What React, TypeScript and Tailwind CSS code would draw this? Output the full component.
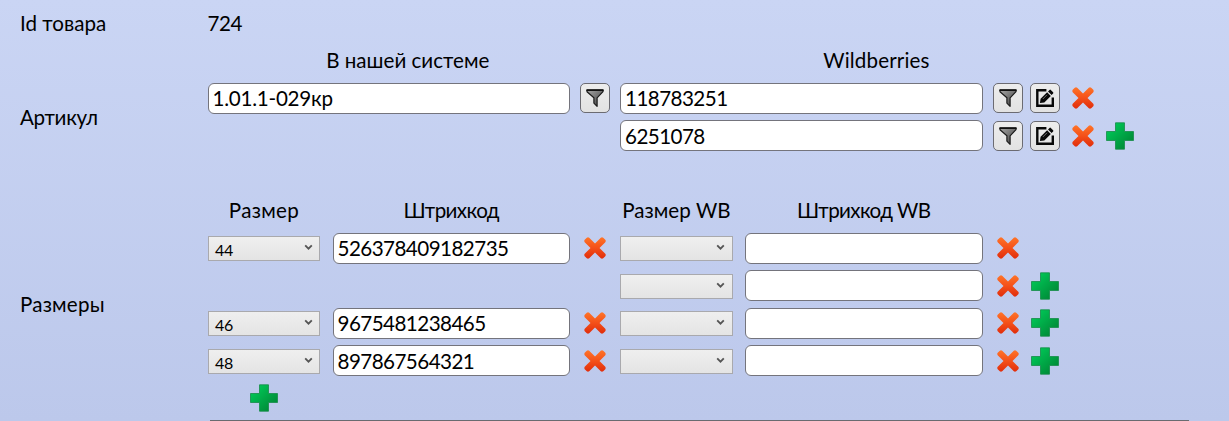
import { ReactNode } from "react";

function Filter() {
  return (
    <button className="flex h-[30px] w-[30px] items-center justify-center rounded-[5px] border border-[#6b6b72] bg-linear-to-b from-[#ededed] to-[#e2e2e2]">
      <svg width="20" height="20" viewBox="0 0 20 20">
        <defs>
          <linearGradient id="funnel" x1="0" y1="0" x2="1" y2="1">
            <stop offset="0" stopColor="#a8a8a8" />
            <stop offset="1" stopColor="#3c3c3c" />
          </linearGradient>
        </defs>
        <path d="M2 1.9h16v1.8l-5.9 6.1v8.5l-3.2-3.2V9.8L2 3.7z" fill="url(#funnel)" stroke="#1a1a1a" strokeWidth="1.2" strokeLinejoin="round" />
        <path d="M2 2.2h16" stroke="#111" strokeWidth="1.6" strokeLinecap="round" />
      </svg>
    </button>
  );
}

function Edit() {
  return (
    <button className="flex h-[30px] w-[30px] items-center justify-center rounded-[5px] border border-[#6b6b72] bg-linear-to-b from-[#ededed] to-[#e2e2e2]">
      <svg width="20" height="20" viewBox="0 0 20 20">
        <path d="M11.4 2.2H2.3v15.5h15.5V9.4" fill="none" stroke="#080808" strokeWidth="2.4" />
        <path d="M4.9 15.1l.7-4.3 6.5-6.5 3.7 3.7-6.5 6.5z" fill="#080808" />
        <path d="M13 3.4l1.5-1.5q.7-.6 1.3 0l2.3 2.3q.6.7 0 1.3l-1.5 1.5z" fill="#080808" />
        <path d="M7.8 11l4.2-4.2" stroke="#8a8a8a" strokeWidth=".8" />
      </svg>
    </button>
  );
}

function Remove() {
  return (
    <button className="flex h-[30px] w-[30px] items-center justify-center">
      <svg width="24" height="24" viewBox="0 0 24 24">
        <defs>
          <linearGradient id="cross" gradientUnits="userSpaceOnUse" x1="0" y1="1" x2="0" y2="23">
            <stop offset="0" stopColor="#ff7528" />
            <stop offset=".5" stopColor="#f45019" />
            <stop offset="1" stopColor="#e02c0b" />
          </linearGradient>
        </defs>
        <path
          d="M6.2 1.7L12 7.5l5.8-5.8q1.2-.9 2.4 0l2.1 2.1q.9 1.2 0 2.4L16.5 12l5.8 5.8q.9 1.2 0 2.4l-2.1 2.1q-1.2.9-2.4 0L12 16.5l-5.8 5.8q-1.2.9-2.4 0l-2.1-2.1q-.9-1.2 0-2.4L7.5 12 1.7 6.2q-.9-1.2 0-2.4l2.1-2.1q1.2-.9 2.4 0z"
          fill="url(#cross)"
        />
      </svg>
    </button>
  );
}

function Add() {
  return (
    <button className="flex h-[30px] w-[30px] items-center justify-center">
      <svg width="28" height="28" viewBox="0 0 28 28">
        <defs>
          <linearGradient id="plus" x1="0" y1="0" x2="1" y2="1">
            <stop offset=".2" stopColor="#00c254" />
            <stop offset=".85" stopColor="#008a37" />
          </linearGradient>
        </defs>
        <path d="M9.5.8h9v8.7h9v9h-9v8.7h-9v-8.7h-9v-9h9z" fill="url(#plus)" stroke="#158b48" strokeWidth=".8" />
      </svg>
    </button>
  );
}

function Field({ children, tracking = "tracking-[-0.55px]" }: { children?: ReactNode; tracking?: string }) {
  return (
    <div className={`flex h-[31px] flex-1 items-center rounded-[6px] border border-[#74747c] bg-white pt-px pl-[4px] leading-none ${tracking}`}>
      <span>{children}</span>
    </div>
  );
}

function Select({ children }: { children?: ReactNode }) {
  return (
    <div className="mt-px flex h-[25px] w-[112.5px] items-start justify-between border border-[#a9a9ad] bg-linear-to-b from-[#efefef] to-[#e4e4e4] pr-[6.5px] pl-[6.5px]">
      <span className="pt-[5px] text-[16px] leading-[16px] tracking-[-0.3px]">{children}</span>
      <svg className="mt-[6px]" width="9" height="9" viewBox="0 0 9 9">
        <path d="M1.2 2.3l3.3 3.4 3.3-3.4" fill="none" stroke="#555" strokeWidth="1.8" />
      </svg>
    </div>
  );
}

function Cell({ children, className = "" }: { children?: ReactNode; className?: string }) {
  return <div className={`flex items-center ${className}`}>{children}</div>;
}

const sizes = [
  { size: "44", barcode: "526378409182735", add: false },
  { size: "", barcode: "", add: true },
  { size: "46", barcode: "9675481238465", add: true },
  { size: "48", barcode: "897867564321", add: true },
];

function SizeRow({ size, barcode, add }: { size: string; barcode: string; add: boolean }) {
  return (
    <>
      <Cell className="col-start-2">{size && <Select>{size}</Select>}</Cell>
      <Cell className="pr-[10px]">{barcode && <Field>{barcode}</Field>}</Cell>
      <Cell>{size && <Remove />}</Cell>
      <Cell><Select /></Cell>
      <Cell className="pr-[10px]"><Field /></Cell>
      <Cell><Remove /></Cell>
      <Cell>{add && <Add />}</Cell>
    </>
  );
}

export default function App() {
  return (
    <div className="flex h-[421px] w-[1229px] flex-col justify-between overflow-hidden bg-linear-to-b from-[#cad5f4] to-[#bcc8eb] pt-[4.25px] text-[20.6px] text-black [font-family:Lato,'Noto_Sans',sans-serif]">
      <div className="grid auto-rows-[37.5px] grid-cols-[187.5px_125px_247.5px_40px_125px_247.5px_37.5px_37.5px_37.5px_30px] pl-[20px] whitespace-nowrap">
        <Cell className="pt-px">Id товара</Cell>
        <Cell className="col-span-9 pt-px tracking-[-0.4px]">724</Cell>

        <Cell className="col-span-3 col-start-2 justify-center pr-[12px]">В нашей системе</Cell>
        <Cell className="col-span-6 justify-center pr-[2px] tracking-[0.15px]">Wildberries</Cell>

        <Cell className="row-span-2 pt-px tracking-[-0.3px]">Артикул</Cell>
        <Cell className="col-span-2 pr-[10px]"><Field tracking="tracking-[-0.25px]">1.01.1-029кр</Field></Cell>
        <Cell><Filter /></Cell>
        <Cell className="col-span-2 pr-[10px]"><Field>118783251</Field></Cell>
        <Cell><Filter /></Cell>
        <Cell><Edit /></Cell>
        <Cell className="col-span-2"><Remove /></Cell>
        <Cell className="col-span-2 col-start-5 pr-[10px]"><Field>6251078</Field></Cell>
        <Cell><Filter /></Cell>
        <Cell><Edit /></Cell>
        <Cell><Remove /></Cell>
        <Cell><Add /></Cell>

        <Cell className="col-span-10" />

        <Cell className="col-start-2 justify-center pr-[12px] tracking-[0.3px]">Размер</Cell>
        <Cell className="justify-center pr-[10px] tracking-[-0.6px]">Штрихкод</Cell>
        <Cell className="col-start-5 justify-center pr-[12px]">Размер WB</Cell>
        <Cell className="justify-center pr-[10px] tracking-[-0.6px]">Штрихкод WB</Cell>

        <Cell className="col-start-1 row-span-4 row-start-7 pt-px tracking-[0.2px]">Размеры</Cell>
        {sizes.map((row, i) => (
          <SizeRow key={i} {...row} />
        ))}
        <Cell className="col-start-2 justify-center pr-[12px]"><Add /></Cell>
      </div>
      <div className="ml-[210px] h-px w-[979px] bg-[#696b70]" />
    </div>
  );
}
